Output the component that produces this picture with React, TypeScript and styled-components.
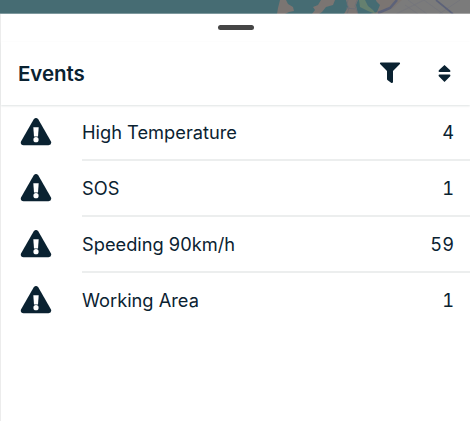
import React from "react";
import styled, { createGlobalStyle } from "styled-components";

const Global = createGlobalStyle`
  * { box-sizing: border-box; }
  body { margin: 0; background: #fff; font-family: Inter, "Liberation Sans", sans-serif; color: #0a2231; overflow: hidden; }
`;

const Screen = styled.main`
  width: 470px;
  height: 421px;
  display: flex;
  flex-direction: column;
`;

const MapStrip = styled.svg`
  display: block;
  flex: none;
  width: 470px;
  height: 14px;
`;

const Sheet = styled.section`
  flex: 1;
  background: #fff;
  border-left: 1px solid #ececec;
`;

const HandleArea = styled.div`
  height: 28px;
  display: flex;
  justify-content: center;
  padding: 11px 0 0 1px;
`;

const Handle = styled.div`
  width: 36px;
  height: 5px;
  border-radius: 3px;
  background: #464646;
`;

const Header = styled.header`
  height: 63px;
  display: flex;
  align-items: center;
  padding: 0 19px 0 17px;
  box-shadow: 0 1px 2px #dfe3e3;
`;

const Title = styled.h1`
  flex: 1;
  margin: 0;
  font-size: 20.5px;
  line-height: 26px;
  font-weight: 600;
  letter-spacing: -0.08px;
`;

const IconButton = styled.button<{ $gap?: number }>`
  display: flex;
  border: 0;
  padding: 0 0 2px;
  background: none;
  color: inherit;
  margin-right: ${(p) => p.$gap ?? 0}px;
`;

const List = styled.ul`
  margin: 0;
  padding: 0;
  list-style: none;
`;

const Row = styled.li`
  height: 55.9px;
  display: flex;
  padding-left: 19px;
`;

const WarningIcon = styled.svg`
  flex: none;
  width: 32px;
  height: 28px;
  margin: 13px 30px 0 0;
`;

const RowBody = styled.div<{ $last: boolean }>`
  flex: 1;
  display: flex;
  justify-content: space-between;
  align-items: center;
  padding: 1px 16px 0 0;
  border-bottom: 2px solid ${(p) => (p.$last ? "transparent" : "#eceeee")};
`;

const Label = styled.span`
  font-size: 18.25px;
  line-height: 26px;
`;

const Count = styled.span`
  font-size: 18.25px;
  line-height: 26px;
  font-variant-numeric: tabular-nums;
`;

const events = [
  { label: "High Temperature", count: 4 },
  { label: "SOS", count: 1 },
  { label: "Speeding 90km/h", count: 59 },
  { label: "Working Area", count: 1 },
];

function Warning() {
  return (
    <WarningIcon viewBox="0 0 32 28">
      <path d="M13.6 1.4Q16-1.2 18.4 1.4L31 23.4Q32 27 28.5 27.2H3.5Q0 27 1 23.4Z" fill="#0a2231" />
      <path d="M13.3 9.2h5.4l-.7 9.2h-4z" fill="#fff" />
      <circle cx="16" cy="21.7" r="2.6" fill="#fff" />
    </WarningIcon>
  );
}

export default function App() {
  return (
    <>
      <Global />
      <Screen>
        <MapStrip viewBox="0 0 470 14">
          <path fill="#466c73" d="M0 0h470v14H0z" />
          <path fill="#7b7572" d="M280 0h6l2 4 5 3 1 4-5 1-4 2h-8l1-6zM321 0h14l-2 5-7 2-4 5-3 2h-7l3-4-2-3 5-2zM346 0h12l-2 5 2 9h-14l4-7zM366 0h9l5 5-3 7-7 2h100V0z" />
          <path fill="#466c73" d="M366 0h10l1 6-3 2-5-2z" />
          <path fill="#65806f" d="M359 0h6l3 6 5 4 3 4-8-3-8-4z" />
          <path fill="#7b7b7b" d="M402 0h68v14h-90l13-6z" />
          <path d="M348 0l-1 4 2 4-2 6M357 0l-2 6 3 8M346 8l9 1" fill="none" stroke="#696d77" strokeWidth=".8" />
          <path d="M405 5l13 9M408 0l19 14M424 0l19 14M396 14l28-14M439 14l21-14" fill="none" stroke="#72747c" strokeWidth=".7" />
          <path d="M397 0l-7 8-12 5" fill="none" stroke="#5c6279" strokeWidth="2.5" />
          <path d="M436 0l17 14" fill="none" stroke="#5c6279" strokeWidth="1.7" />
          <path fill="#fff" opacity=".3" d="M0 13h470v1H0z" />
        </MapStrip>
        <Sheet>
          <HandleArea><Handle /></HandleArea>
          <Header>
            <Title>Events</Title>
            <IconButton $gap={37} aria-label="Filter events">
              <svg width="22" height="22" viewBox="0 0 22 22">
                <path d="M1.5.5h19q1 .5.4 1.5L14 8.9V20q-.3 1.4-1.6.9L8.4 18Q8 17.6 8 17V8.9L1.1 2Q.5 1 1.5.5Z" fill="#0a2231" />
              </svg>
            </IconButton>
            <IconButton aria-label="Sort events">
              <svg width="13" height="18" viewBox="0 0 13 18">
                <path d="M6.5 1 12.2 6.2Q13 7.7 11.6 8H1.4Q0 7.7.8 6.2ZM6.5 18 .8 12.3Q0 10.8 1.4 10.5h10.2q1.4.3.6 1.8Z" fill="#0a2231" />
              </svg>
            </IconButton>
          </Header>
          <List>
            {events.map((event, index) => (
              <Row key={event.label}>
                <Warning />
                <RowBody $last={index === events.length - 1}>
                  <Label>{event.label}</Label>
                  <Count>{event.count}</Count>
                </RowBody>
              </Row>
            ))}
          </List>
        </Sheet>
      </Screen>
    </>
  );
}
